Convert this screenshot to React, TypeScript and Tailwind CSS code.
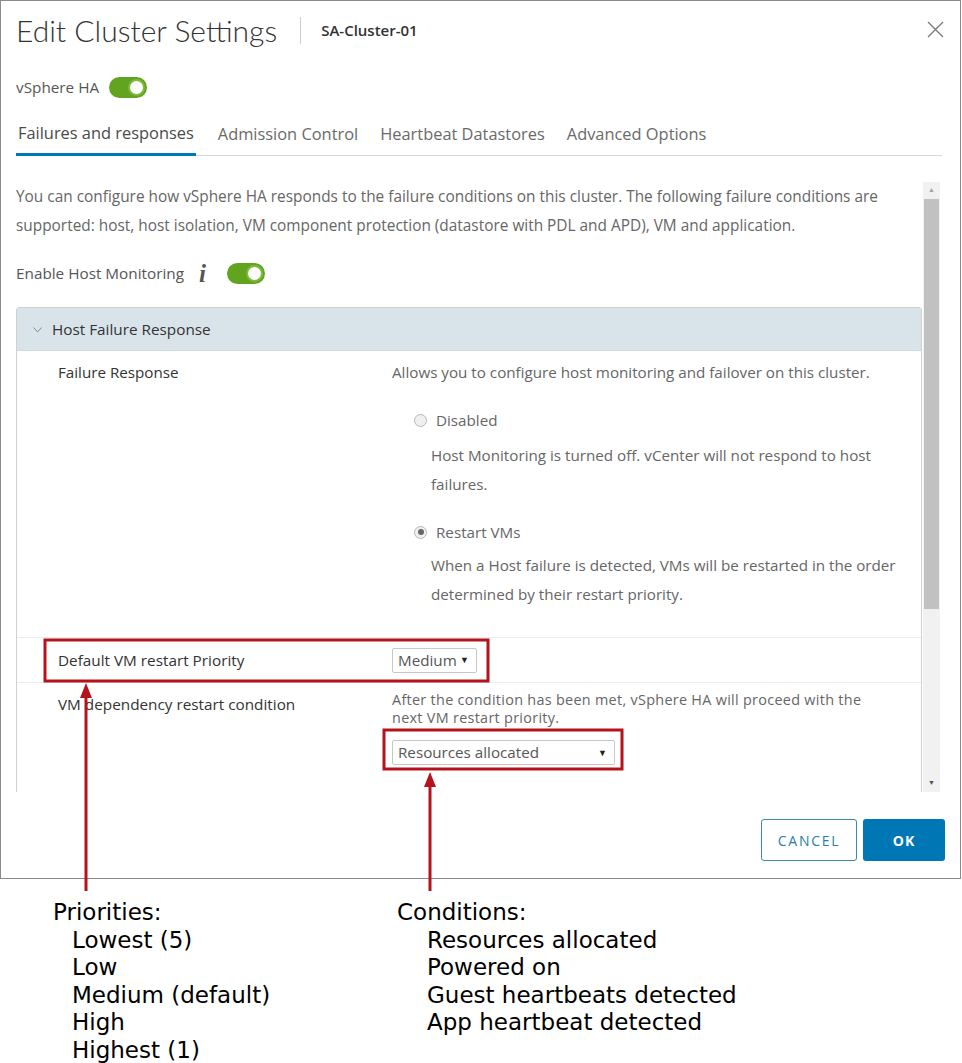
import React from 'react';

const Toggle = () => (
  <span className="inline-flex items-center justify-end w-[38px] h-[21px] rounded-full bg-[#62a420] px-[2px]">
    <span className="block w-[17px] h-[17px] rounded-full bg-white border-2 border-[#7cbb3c]" />
  </span>
);

const Radio = ({ checked }: { checked?: boolean }) => (
  <span className="inline-flex items-center justify-center w-[13px] h-[13px] rounded-full border border-[#b8b8b8] bg-[#f0f0f0]">
    {checked && <span className="block w-[6px] h-[6px] rounded-full bg-[#666]" />}
  </span>
);

const Select = ({ label, width }: { label: string; width: string }) => (
  <div
    className={`flex items-center justify-between h-[25px] border border-[#c8c8c8] rounded-[2px] bg-white pl-[5px] pr-[7px] text-[15.2px] text-[#565656] ${width}`}
  >
    <span>{label}</span>
    <span className="text-[9px] text-[#222]">▼</span>
  </div>
);

const tabs = ['Failures and responses', 'Admission Control', 'Heartbeat Datastores', 'Advanced Options'];

export default function App() {
  return (
    <div className="relative w-[962px] h-[1063px] bg-white font-['Open_Sans',sans-serif]">
      {/* dialog */}
      <div className="w-[961px] h-[879px] border border-[#8a8a8a] flex flex-col">
        <div className="h-[58px] flex items-center pl-[15px] pr-[16px]">
          <h1 className="font-['Lato',sans-serif] text-[30px] font-light text-[#333]">Edit Cluster Settings</h1>
          <span className="ml-[23px] w-px h-[27px] bg-[#ccc]" />
          <span className="ml-[20px] text-[15px] font-semibold text-[#333]">SA-Cluster-01</span>
          <svg className="ml-auto -mt-[1px]" width="17" height="17" viewBox="0 0 17 17">
            <path d="M1 1 L16 16 M16 1 L1 16" stroke="#777" strokeWidth="1.3" fill="none" />
          </svg>
        </div>

        <div className="h-[56px] flex items-center gap-[10px] pl-[15px] text-[15.3px] text-[#565656]">
          <span>vSphere HA</span>
          <Toggle />
        </div>

        <div className="ml-[15px] w-[926px] flex gap-[22px] border-b border-[#d8d8d8] h-[41px] text-[16.4px] text-[#6a6a6a]">
          {tabs.map((t, i) => (
            <div
              key={t}
              className={
                i === 0
                  ? 'h-[41px] flex items-center px-[2px] pb-[2px] border-b-[3px] border-[#0079b8] text-[#4a4a4a] -mb-px'
                  : 'h-[41px] flex items-center pb-[2px]'
              }
            >
              {t}
            </div>
          ))}
        </div>

        {/* scroll area */}
        <div className="mt-[26px] h-[610px] flex pl-[15px] overflow-hidden">
          <div className="w-[906px] overflow-hidden">
            <p className="text-[15.4px] leading-[29px] text-[#666] whitespace-nowrap">
              You can configure how vSphere HA responds to the failure conditions on this cluster. The following failure
              conditions are
              <br />
              supported: host, host isolation, VM component protection (datastore with PDL and APD), VM and application.
            </p>
            <div className="mt-[22px] h-[22px] flex items-center text-[15.3px] text-[#565656]">
              <span>Enable Host Monitoring</span>
              <span className="ml-[15px] mr-[21px] font-['Liberation_Serif',serif] italic font-bold text-[25px] text-[#555] leading-none">
                i
              </span>
              <Toggle />
            </div>

            <div className="mt-[23px] border border-[#d0d0d0] rounded-t-[3px] h-[600px]">
              <div className="h-[43px] bg-[#d9e4ea] flex items-center pl-[16px] text-[15.3px] text-[#333] border-b border-[#cfd8dd]">
                <svg width="9" height="6" viewBox="0 0 9 6" className="mr-[10px] mt-[1px]">
                  <path d="M0.5 0.5 L4.5 5 L8.5 0.5" stroke="#888" strokeWidth="1" fill="none" />
                </svg>
                Host Failure Response
              </div>

              <div className="flex pl-[41px] pt-[10px] pb-[28px] border-b border-[#ececec] text-[15.2px]">
                <div className="w-[334px] leading-[22px] text-[#333]">Failure Response</div>
                <div className="flex-1 text-[#666] whitespace-nowrap">
                  <div className="leading-[22px]">Allows you to configure host monitoring and failover on this cluster.</div>
                  <div className="mt-[26px] ml-[22px] h-[22px] flex items-center gap-[9px]">
                    <Radio />
                    <span>Disabled</span>
                  </div>
                  <p className="mt-[10px] ml-[39px] leading-[29px]">
                    Host Monitoring is turned off. vCenter will not respond to host
                    <br />
                    failures.
                  </p>
                  <div className="mt-[22px] ml-[22px] h-[22px] flex items-center gap-[9px]">
                    <Radio checked />
                    <span>Restart VMs</span>
                  </div>
                  <p className="mt-[8px] ml-[39px] leading-[29px]">
                    When a Host failure is detected, VMs will be restarted in the order
                    <br />
                    determined by their restart priority.
                  </p>
                </div>
              </div>

              <div className="flex items-center h-[45px] pl-[41px] border-b border-[#ececec] text-[15.3px]">
                <div className="w-[334px] text-[#333]">Default VM restart Priority</div>
                <Select label="Medium" width="w-[85px]" />
              </div>

              <div className="flex pl-[41px] pt-[9px] text-[15.3px]">
                <div className="w-[334px] leading-[24px] text-[#333]">VM dependency restart condition</div>
                <div className="flex-1 text-[#666] whitespace-nowrap">
                  <p className="text-[14.4px] tracking-[0.3px] leading-[18px] -mt-[1px]">
                    After the condition has been met, vSphere HA will proceed with the
                    <br />
                    next VM restart priority.
                  </p>
                  <div className="mt-[13px]">
                    <Select label="Resources allocated" width="w-[223px]" />
                  </div>
                </div>
              </div>
            </div>
          </div>

          {/* scrollbar */}
          <div className="ml-px w-[17px] h-full bg-[#f1f1f1] flex flex-col items-center">
            <div className="h-[17px] flex items-center justify-center text-[7px] text-[#a3a3a3]">▲</div>
            <div className="w-[15px] h-[410px] bg-[#c1c1c1]" />
            <div className="mt-auto h-[17px] flex items-center justify-center text-[7px] text-[#505050]">▼</div>
          </div>
        </div>

        {/* footer */}
        <div className="mt-[27px] flex justify-end gap-[6px] pr-[15px]">
          <button className="w-[96px] h-[42px] rounded-[3px] border border-[#3a8aa8] bg-white text-[14px] tracking-[1.7px] text-[#2a7fa5]">
            CANCEL
          </button>
          <button className="w-[82px] h-[42px] rounded-[3px] bg-[#0077b5] text-[14px] font-bold tracking-[1px] text-white">
            OK
          </button>
        </div>
      </div>

      {/* annotations */}
      <div className="flex font-['DejaVu_Sans',sans-serif] text-[23px] text-black leading-[27.5px] pt-[20px]">
        <div className="w-[397px] pl-[53px]">
          <div>Priorities:</div>
          <div className="pl-[19px]">
            <div>Lowest (5)</div>
            <div>Low</div>
            <div>Medium (default)</div>
            <div>High</div>
            <div>Highest (1)</div>
          </div>
        </div>
        <div>
          <div>Conditions:</div>
          <div className="pl-[30px]">
            <div>Resources allocated</div>
            <div>Powered on</div>
            <div>Guest heartbeats detected</div>
            <div>App heartbeat detected</div>
          </div>
        </div>
      </div>

      {/* red callouts over the dialog */}
      <svg className="absolute left-0 top-0 pointer-events-none" width="962" height="1063" viewBox="0 0 962 1063">
        <rect x="45" y="640" width="443" height="41" fill="none" stroke="#b5121b" strokeWidth="3" />
        <rect x="384" y="730" width="238" height="39" fill="none" stroke="#b5121b" strokeWidth="3" />
        <line x1="86" y1="696" x2="86" y2="891" stroke="#b5121b" strokeWidth="3" />
        <polygon points="86,683 80,698 92,698" fill="#b5121b" />
        <line x1="430" y1="785" x2="430" y2="891" stroke="#b5121b" strokeWidth="3" />
        <polygon points="430,772 424,787 436,787" fill="#b5121b" />
      </svg>
    </div>
  );
}
